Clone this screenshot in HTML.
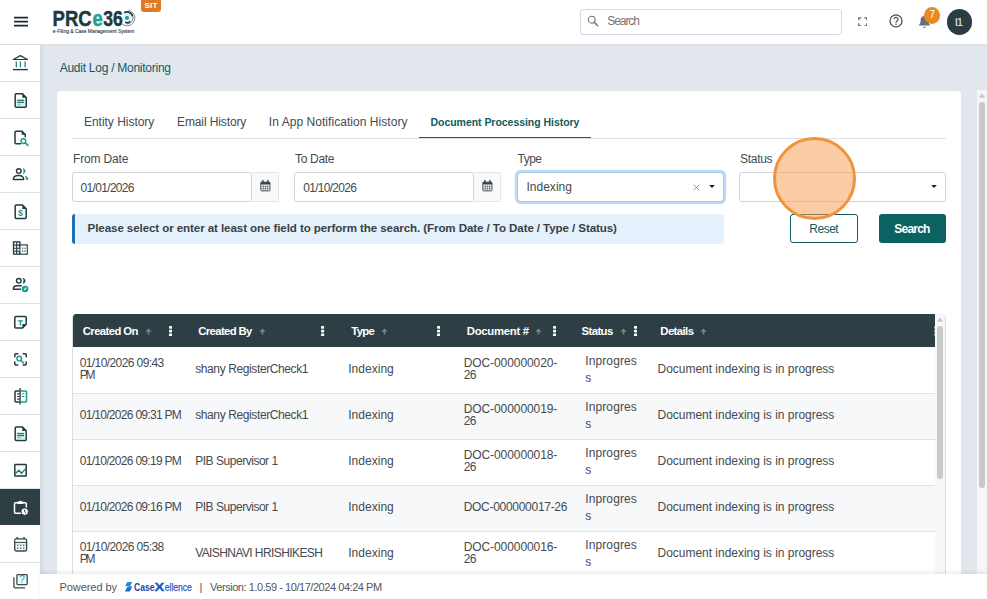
<!DOCTYPE html>
<html lang="en">
<head>
<meta charset="utf-8">
<title>Audit Log / Monitoring</title>
<style>
*{box-sizing:border-box;margin:0;padding:0}
html,body{width:987px;height:599px;overflow:hidden;background:#e2e7ee;font-family:"Liberation Sans",sans-serif;color:#454a4e}
.b{position:absolute}
.t{position:absolute;z-index:6;white-space:pre;line-height:1.16;font-family:"Liberation Sans",sans-serif}
#hdr{left:0;top:0;width:987px;height:45px;background:#fff;border-bottom:1px solid #dadee3;z-index:5}
#side{left:0;top:45px;width:40px;height:555px;background:#fff;box-shadow:2px 0 4px rgba(120,135,160,.18)}
.it{position:absolute;left:0;width:40px;height:37px;border-bottom:1px solid #dfe2e5}
.it svg{position:absolute;left:10px;top:7px;width:20px;height:20px;overflow:visible}
.act{background:#2d3f45;border-bottom:none;height:36px}
#card{left:57px;top:91px;width:904px;height:520px;background:#fff;border-radius:4px}
#tabline{left:72px;top:138px;width:874px;height:1px;background:#dcdfe3}
#tabact{left:419px;top:136.700px;width:172px;height:1.700px;background:#176264}
.inp{position:absolute;top:172px;height:30px;border:1px solid #d0d4d8;border-radius:3px;background:#fff}
.cal{position:absolute;top:172px;height:30px;width:27px;border:1px solid #e3e6ea;border-left:none;background:#f7f9fb;border-radius:0 2px 2px 0}
.cal svg{position:absolute;left:8.100px;top:7px;width:10.800px;height:11.700px}
#info{left:72px;top:214px;width:652px;height:30px;background:#e4f1fc;border-left:3px solid #1f6fb5;border-radius:3px}
#reset{left:790px;top:214px;width:68px;height:29px;border:1px solid #0f5c5e;border-radius:3px;background:#fff}
#search{left:879px;top:214px;width:67px;height:29px;border-radius:3px;background:#0b6260}
#grid{left:72px;top:314px;width:874px;height:280px;border-left:1px solid #d9dde1;border-right:1px solid #d9dde1;border-radius:4px 4px 0 0;overflow:hidden;background:#fff}
#ghead{left:0;top:0;width:862px;height:33px;background:#2d3f45}
.row{position:absolute;left:0;width:862px;height:46px;border-bottom:1px solid #dfe2e6;background:#fff}
.row.alt{background:#f6f8fa}
#gsb{left:862px;top:0;width:10px;height:280px;background:#f8f8f9}
#foot{left:40px;top:574px;width:947px;height:25px;background:#fff;box-shadow:0 -2px 4px rgba(0,0,0,.08)}
#psb{left:977px;top:90px;width:10px;height:490px;background:#f5f6f8}
.thumb{position:absolute;background:#c9c9c9;border-radius:3px}
.dots{position:absolute;width:3px;height:11px}
.dots i{position:absolute;left:0;width:2.6px;height:2.6px;border-radius:50%;background:#fff}
.arr{position:absolute;width:7px;height:8px}
</style>
</head>
<body>
<!-- header -->
<div class="b" id="hdr">
  <svg class="b" style="left:13px;top:15px" width="16" height="13" viewBox="0 0 16 13"><path d="M1 2.6h14M1 6.6h14M1 10.6h14" stroke="#1e2a30" stroke-width="1.7" fill="none"/></svg>
  <!-- logo -->
  <svg class="b" style="left:50px;top:6px" width="90" height="30" viewBox="0 0 90 30">
    <text x="2.6" y="19.9" font-family="Liberation Sans, sans-serif" font-weight="bold" font-size="22.8" fill="#1d3a42" stroke="#1d3a42" stroke-width=".5" textLength="39" lengthAdjust="spacingAndGlyphs">PRC</text>
    <text x="42.4" y="19.9" font-family="Liberation Sans, sans-serif" font-weight="bold" font-size="22.8" fill="#2a9d90" stroke="#2a9d90" stroke-width=".5" textLength="10.3" lengthAdjust="spacingAndGlyphs">e</text>
    <text x="53.2" y="19.9" font-family="Liberation Sans, sans-serif" font-weight="bold" font-size="22.8" fill="#1d3a42" stroke="#1d3a42" stroke-width=".5" textLength="19.6" lengthAdjust="spacingAndGlyphs">36</text>
    <g fill="none">
      <circle cx="77" cy="11.9" r="2.1" fill="#2a9d90"/>
      <circle cx="77" cy="11.9" r="3.5" stroke="#a6dad4" stroke-width=".6"/>
      <path d="M74.05 6.79A5.9 5.9 0 0 1 82.70 10.37" stroke="#1d3a42" stroke-width="1.8"/>
      <path d="M82.70 10.37A5.9 5.9 0 0 1 75.98 17.71" stroke="#3d565d" stroke-width=".8"/>
      <path d="M80.32 15.22A4.7 4.7 0 0 1 75.01 16.16" stroke="#1d3a42" stroke-width="1.5"/>
      <path d="M78.35 4.22A7.8 7.8 0 1 1 71.02 16.91" stroke="#4a6168" stroke-width=".75"/>
    </g>
    <text x="2.8" y="26.6" font-family="Liberation Sans, sans-serif" font-size="4.700" fill="#2c4249" stroke="#2c4249" stroke-width=".12" textLength="81.5" lengthAdjust="spacingAndGlyphs">e-Filing &amp; Case Management System</text>
  </svg>
  <div class="b" style="left:141px;top:0;width:20px;height:11.5px;background:#e07a22;border-radius:0 0 3px 3px"></div>
  <!-- search -->
  <div class="b" style="left:580px;top:9px;width:262px;height:26px;border:1px solid #d6d9dd;border-radius:3px;background:#fff"></div>
  <svg class="b" style="left:587px;top:15px" width="12" height="12" viewBox="0 0 12 12"><circle cx="4.7" cy="4.7" r="3.4" fill="none" stroke="#6f7477" stroke-width="1.1"/><path d="M7.3 7.3l3.4 3.4" stroke="#6f7477" stroke-width="1.5" stroke-linecap="round"/></svg>
  <!-- fullscreen -->
  <svg class="b" style="left:857.700px;top:16.600px" width="9.600" height="9.600" viewBox="0 0 10 10"><path d="M.8 3.400V.8h2.600M6.600.8h2.600v2.600M9.200 6.600v2.600H6.600M3.400 9.200H.8V6.600" fill="none" stroke="#5f6570" stroke-width="1.300"/></svg>
  <!-- help -->
  <svg class="b" style="left:888px;top:13px" width="16" height="16" viewBox="0 0 16 16"><circle cx="8" cy="7.9" r="6" fill="none" stroke="#4b4f5c" stroke-width="1.3"/><path d="M6 6.3a2 2 0 1 1 3.1 1.7c-.7.5-1.1.8-1.1 1.7" fill="none" stroke="#4b4f5c" stroke-width="1.2"/><circle cx="8" cy="11.3" r=".8" fill="#4b4f5c"/></svg>
  <!-- bell -->
  <svg class="b" style="left:918px;top:15px" width="13" height="14" viewBox="0 0 13 14"><path d="M6.5 1C4 1 2.6 3 2.6 5.2c0 2.6-.6 3.700-1.700 4.800v.6h11.200V10c-1.100-1.100-1.700-2.200-1.700-4.800C10.400 3 9 1 6.500 1z" fill="#6b6e7c"/><path d="M5.200 11.800a1.300 1.300 0 0 0 2.600 0z" fill="#6b6e7c"/></svg>
  <div class="b" style="left:924px;top:7px;width:16px;height:16.500px;border-radius:50%;background:#ea8a25"></div>
  <div class="b" style="left:946.800px;top:9.300px;width:25.400px;height:25.400px;border-radius:50%;background:#2b3d43"></div>
</div>
<!-- sidebar -->
<div class="b" id="side">
<div class="it" style="top:0px"><svg viewBox="0 0 20 20"><path d="M3.300 7.500L10.400 3.600 17.500 7.500z" fill="none" stroke="#223a40" stroke-width="1.2" stroke-linejoin="round" stroke-linecap="round" /><path d="M2.900 17.600h14.900" fill="none" stroke="#223a40" stroke-width="1.4"/><path d="M6.300 9.500v5.800M10.400 9.500v5.800M15.100 9.500v5.800" fill="none" stroke="#1c7a72" stroke-width="1.2"/></svg></div>
<div class="it" style="top:37px"><svg viewBox="0 0 20 20"><path d="M6.200 4.75h6.300l3.700 3.700v8.80a1 1 0 0 1-1 1H6.200a1 1 0 0 1-1-1V5.75a1 1 0 0 1 1-1z" fill="#fff" stroke="#223a40" stroke-width="1.500" stroke-linejoin="round"/><path d="M12.300 4.45l4.300 4.300h-4.300z" fill="#223a40"/><rect x="6.600" y="9.800" width="8.200" height="7" fill="#d8f0ed"/><path d="M7.300 11.400h6.700M7.300 13.400h6.700" fill="none" stroke="#1c7a72" stroke-width="1.3"/><path d="M7.300 15.600h3.400" fill="none" stroke="#8fd3cb" stroke-width="1.6"/></svg></div>
<div class="it" style="top:74px"><svg viewBox="0 0 20 20"><path d="M10.500 17.800H6a1 1 0 0 1-1-1V6.200a1 1 0 0 1 1-1h6l3.300 3.300v2.300" fill="none" stroke="#223a40" stroke-width="1.5" stroke-linejoin="round" stroke-linecap="round" /><path d="M11.700 4.700l4.100 4.100h-4.100z" fill="#223a40"/><circle cx="13.400" cy="15.100" r="2.400" fill="none" stroke="#1d9a8b" stroke-width="1.4"/><path d="M15.200 16.900l2.800 2.500" fill="none" stroke="#1d9a8b" stroke-width="1.5" stroke-linejoin="round" stroke-linecap="round" /></svg></div>
<div class="it" style="top:111px"><svg viewBox="0 0 20 20"><circle cx="8.800" cy="8.100" r="2.300" fill="none" stroke="#223a40" stroke-width="1.4"/><path d="M3.300 16.500c0-2.600 2.200-4 5.200-4s5.200 1.400 5.200 4z" fill="none" stroke="#223a40" stroke-width="1.4" stroke-linejoin="round" stroke-linecap="round" /><path d="M13.200 5.600a2.600 2.600 0 0 1 0 5c1-1.500 1-3.500 0-5z" fill="#1d9a8b" stroke="#1d9a8b" stroke-width=".8" stroke-linejoin="round"/><path d="M15.400 13.200c1.600.4 2.500 1.600 2.500 3.300h-1.600c0-1.300-.3-2.400-.9-3.300z" fill="#1d9a8b" stroke="#1d9a8b" stroke-width=".8" stroke-linejoin="round"/></svg></div>
<div class="it" style="top:148px"><svg viewBox="0 0 20 20"><path d="M6.200 5.05h6.300l3.700 3.700v8.80a1 1 0 0 1-1 1H6.200a1 1 0 0 1-1-1V6.05a1 1 0 0 1 1-1z" fill="#fff" stroke="#223a40" stroke-width="1.500" stroke-linejoin="round"/><path d="M12.300 4.75l4.300 4.300h-4.300z" fill="#223a40"/><text x="10.500" y="15.800" text-anchor="middle" font-family="Liberation Sans, sans-serif" font-weight="bold" font-size="8.800" fill="#1d9a8b">$</text></svg></div>
<div class="it" style="top:185px"><svg viewBox="0 0 20 20"><rect x="3.500" y="4.900" width="6.400" height="12.200" fill="#fff" stroke="#223a40" stroke-width="1.300"/><rect x="10" y="8" width="7.200" height="9.100" fill="#fff" stroke="#223a40" stroke-width="1.300"/><rect x="4" y="11.500" width="5.500" height="3" fill="#d8f0ed"/><path d="M6.700 4.900v12.200M3.500 8.100h6.400M3.500 11.200h6.400M3.500 14.300h6.400" fill="none" stroke="#223a40" stroke-width="1.1"/><rect x="10.700" y="8.700" width="5.800" height="7.700" fill="#f1faf9"/><path d="M12.100 11.300h1.100M14.500 11.300h1.100M12.100 14.100h1.100M14.500 14.100h1.100" fill="none" stroke="#223a40" stroke-width="1.1"/></svg></div>
<div class="it" style="top:222px"><svg viewBox="0 0 20 20"><circle cx="8.800" cy="6.800" r="2.300" fill="none" stroke="#223a40" stroke-width="1.4"/><path d="M10.500 15.200H3.300c0-2.300 1.500-3.400 3.700-3.400h4.200" fill="none" stroke="#223a40" stroke-width="1.4" stroke-linejoin="round" stroke-linecap="round" /><path d="M13.200 4.300a2.600 2.600 0 0 1 0 5c1-1.500 1-3.500 0-5z" fill="#223a40" stroke="#223a40" stroke-width=".8" stroke-linejoin="round"/><circle cx="15.100" cy="15" r="3.300" fill="#1d9a8b"/><path d="M13.800 16.300l.3-1.100 1.900-1.900.8.800-1.900 1.900z" fill="#fff"/></svg></div>
<div class="it" style="top:259px"><svg viewBox="0 0 20 20"><path d="M5.800 5.600h9.400a1 1 0 0 1 1 1v6.700l-3.700 3.700H5.800a1 1 0 0 1-1-1V6.600a1 1 0 0 1 1-1z" fill="#fff" stroke="#223a40" stroke-width="1.500" stroke-linejoin="round"/><path d="M16.700 13l-4.300 4.300v-4.300z" fill="#223a40"/><path d="M7.800 9.900h5.300M10.450 9.900v4.600" fill="none" stroke="#1d9a8b" stroke-width="1.4"/></svg></div>
<div class="it" style="top:296px"><svg viewBox="0 0 20 20"><path d="M4.800 8.800V6.800a1 1 0 0 1 1-1h2M13.200 5.800h2a1 1 0 0 1 1 1v2M16.200 14v2a1 1 0 0 1-1 1h-2M7.800 17h-2a1 1 0 0 1-1-1v-2" fill="none" stroke="#223a40" stroke-width="1.5" stroke-linejoin="round" stroke-linecap="round" /><circle cx="9.200" cy="10.600" r="2.300" fill="none" stroke="#1d9a8b" stroke-width="1.4"/><path d="M10.900 12.300l2.600 2.600" fill="none" stroke="#1d9a8b" stroke-width="1.5" stroke-linejoin="round" stroke-linecap="round" /></svg></div>
<div class="it" style="top:333px"><svg viewBox="0 0 20 20"><path d="M9.600 6.100H6a1 1 0 0 0-1 1v8.900a1 1 0 0 0 1 1h3.600" fill="none" stroke="#223a40" stroke-width="1.5" stroke-linejoin="round" stroke-linecap="round" /><path d="M7.300 8.800h2.300M7.300 11.500h2.300M7.300 14.200h2.300" fill="none" stroke="#223a40" stroke-width="1.2"/><path d="M10.100 3.100v16.300" fill="none" stroke="#4a5a5f" stroke-width="1.6"/><path d="M11 6.100h4.500a1 1 0 0 1 1 1v8.900a1 1 0 0 1-1 1H11" fill="none" stroke="#1d9a8b" stroke-width="1.5" stroke-linejoin="round" stroke-linecap="round" /><path d="M11.800 8.800h2.600M11.800 11.500h2.600" fill="none" stroke="#1d9a8b" stroke-width="1.1"/></svg></div>
<div class="it" style="top:370px"><svg viewBox="0 0 20 20"><path d="M6.200 5.05h6.300l3.700 3.700v8.80a1 1 0 0 1-1 1H6.200a1 1 0 0 1-1-1V6.05a1 1 0 0 1 1-1z" fill="#fff" stroke="#223a40" stroke-width="1.500" stroke-linejoin="round"/><path d="M12.300 4.75l4.300 4.300h-4.300z" fill="#223a40"/><rect x="6.600" y="10.100" width="8.200" height="7" fill="#d8f0ed"/><path d="M7.300 11.700h6.700M7.300 13.700h6.700" fill="none" stroke="#1c7a72" stroke-width="1.3"/><path d="M7.300 15.900h3.400" fill="none" stroke="#8fd3cb" stroke-width="1.6"/></svg></div>
<div class="it" style="top:407px"><svg viewBox="0 0 20 20"><rect x="4.800" y="5.600" width="11.400" height="11.400" rx=".6" fill="#fff" stroke="#223a40" stroke-width="1.500"/><path d="M5.200 14.600l3.800-3.300 2.500 3.100 4.300-4.800" fill="none" stroke="#1c7a72" stroke-width="1.4" stroke-linejoin="round" stroke-linecap="round" /></svg></div>
<div class="it act" style="top:444px"><svg viewBox="0 0 20 20"><path d="M10.800 17.200H5.500a1 1 0 0 1-1-1V7.700a1 1 0 0 1 1-1h2M13.300 6.700h2a1 1 0 0 1 1 1v3.300" fill="none" stroke="#ffffff" stroke-width="1.5" stroke-linejoin="round" stroke-linecap="round" /><path d="M7.500 5.600h1.600a1.400 1.400 0 0 1 2.600 0h1.600v2.300H7.500z" fill="#ffffff"/><circle cx="14.700" cy="15.600" r="3.700" fill="#ffffff" stroke="#2c3e44" stroke-width=".9"/><path d="M14.700 13.600v2.200l1.300.8" stroke="#2c3e44" stroke-width="1" fill="none"/></svg></div>
<div class="it" style="top:481px"><svg viewBox="0 0 20 20"><rect x="4.700" y="6" width="11.900" height="12" rx="1.400" fill="#e6f5f3" stroke="#3a4a50" stroke-width="1.400"/><path d="M4.700 9.300h11.900" fill="none" stroke="#3a4a50" stroke-width="1.3"/><path d="M5.400 6.700h10.500v2H5.400z" fill="#fff"/><path d="M7.300 4.100v2M14 4.100v2" fill="none" stroke="#3a4a50" stroke-width="1.5"/><g fill="#3a4a50"><rect x="7.100" y="11.600" width="1.200" height="1.200"/><rect x="10.100" y="11.600" width="1.200" height="1.200"/><rect x="13.100" y="11.600" width="1.200" height="1.200"/><rect x="7.100" y="14.600" width="1.200" height="1.200"/><rect x="10.100" y="14.600" width="1.200" height="1.200"/><rect x="13.100" y="14.600" width="1.200" height="1.200"/></g></svg></div>
<div class="it" style="top:518px"><svg viewBox="0 0 20 20"><rect x="6.900" y="4.700" width="10.300" height="9.900" rx=".8" fill="#eef8f7" stroke="#3a4a50" stroke-width="1.300"/><path d="M3.900 7.600v9.200a1 1 0 0 0 1 1h9.700" fill="none" stroke="#3a4a50" stroke-width="1.3" stroke-linejoin="round" stroke-linecap="round" /><text x="12" y="13.300" text-anchor="middle" font-family="Liberation Sans, sans-serif" font-size="10" fill="#1d9a8b">?</text></svg></div>
</div>
<!-- card -->
<div class="b" id="card"></div>
<div class="b" id="tabline"></div>
<div class="b" id="tabact"></div>
<div class="inp" style="left:72px;width:180px"></div>
<div class="cal" style="left:252px"><svg viewBox="0 0 12 13"><rect x=".9" y="2.400" width="10.200" height="9.700" rx=".8" fill="#fff" stroke="#3b4348" stroke-width="1"/><path d="M.9 2.400h10.200v2.600H.9z" fill="#3b4348"/><path d="M3.200.5v2.800M8.800.5v2.800" stroke="#3b4348" stroke-width="1.600" stroke-linecap="round"/><path d="M.9 7.400h10.200M.9 9.700h10.200M3.700 5v7M6 5v7M8.400 5v7" stroke="#5d656a" stroke-width=".7"/></svg></div>
<div class="inp" style="left:294px;width:180px"></div>
<div class="cal" style="left:474px"><svg viewBox="0 0 12 13"><rect x=".9" y="2.400" width="10.200" height="9.700" rx=".8" fill="#fff" stroke="#3b4348" stroke-width="1"/><path d="M.9 2.400h10.200v2.600H.9z" fill="#3b4348"/><path d="M3.200.5v2.800M8.800.5v2.800" stroke="#3b4348" stroke-width="1.600" stroke-linecap="round"/><path d="M.9 7.400h10.200M.9 9.700h10.200M3.700 5v7M6 5v7M8.400 5v7" stroke="#5d656a" stroke-width=".7"/></svg></div>
<div class="inp" style="left:517px;width:207px;border-color:#a3c6ec;border-radius:4px;box-shadow:0 0 0 2.200px #c0d9f4"></div>
<svg class="b" style="left:691.500px;top:182.500px" width="9" height="9" viewBox="0 0 9 9"><path d="M1.600 1.800l5.600 5.400M7.200 1.800l-5.600 5.400" stroke="#8d9297" stroke-width=".9"/></svg>
<svg class="b" style="left:708px;top:184px" width="8" height="5" viewBox="0 0 8 5"><path d="M1.100 1h5.800L4 4.100z" fill="#1d2226"/></svg>
<div class="inp" style="left:739px;width:207px"></div>
<svg class="b" style="left:930px;top:184px" width="8" height="5" viewBox="0 0 8 5"><path d="M1.100 1h5.800L4 4.100z" fill="#1d2226"/></svg>
<div class="b" id="info"></div>
<div class="b" id="reset"></div>
<div class="b" id="search"></div>
<!-- grid -->
<div class="b" id="grid">
  <div class="row" style="top:34px"></div>
  <div class="row alt" style="top:80px"></div>
  <div class="row" style="top:126px"></div>
  <div class="row alt" style="top:172px"></div>
  <div class="row" style="top:218px"></div>
  <div class="b" id="ghead"></div>
  <div class="b" id="gsb">
    <svg class="b" style="left:2px;top:2.500px" width="6" height="5" viewBox="0 0 6 5"><path d="M3 .2L6 4.700H0z" fill="#c6c6c6"/></svg>
    <div class="thumb" style="left:2px;top:12px;width:6px;height:153px"></div>
  </div>
</div>
<!-- page scrollbar -->
<div class="b" id="psb">
  <svg class="b" style="left:2px;top:2.500px" width="6" height="5" viewBox="0 0 6 5"><path d="M3 .2L6 4.700H0z" fill="#c6c6c6"/></svg>
  <div class="thumb" style="left:2px;top:12px;width:6px;height:386px"></div>
</div>
<!-- footer -->
<div class="b" id="foot"></div>
<!-- texts -->
<span class="t" style="left:59.7px;top:61.6px;font-size:12px;color:#0f5c5e;letter-spacing:-0.26px">Audit Log / Monitoring</span>
<span class="t" style="left:84.0px;top:116.3px;font-size:12px;color:#454a4e;letter-spacing:-0.03px">Entity History</span>
<span class="t" style="left:177.0px;top:116.3px;font-size:12px;color:#454a4e;letter-spacing:-0.11px">Email History</span>
<span class="t" style="left:268.8px;top:116.3px;font-size:12px;color:#454a4e;letter-spacing:0.05px">In App Notification History</span>
<span class="t" style="left:430.5px;top:116.1px;font-size:10.5px;font-weight:bold;color:#0f5c5e;letter-spacing:-0.04px">Document Processing History</span>
<span class="t" style="left:73.0px;top:152.9px;font-size:12px;color:#454a4e;letter-spacing:-0.15px">From Date</span>
<span class="t" style="left:295.0px;top:152.9px;font-size:12px;color:#454a4e;letter-spacing:-0.31px">To Date</span>
<span class="t" style="left:517.5px;top:152.9px;font-size:12px;color:#454a4e;letter-spacing:-0.51px">Type</span>
<span class="t" style="left:740.0px;top:152.9px;font-size:12px;color:#454a4e;letter-spacing:-0.29px">Status</span>
<span class="t" style="left:80.6px;top:181.7px;font-size:12px;color:#454a4e;letter-spacing:-0.68px">01/01/2026</span>
<span class="t" style="left:303.2px;top:181.7px;font-size:12px;color:#454a4e;letter-spacing:-0.70px">01/10/2026</span>
<span class="t" style="left:526.4px;top:180.9px;font-size:12px;color:#454a4e;letter-spacing:0.03px">Indexing</span>
<span class="t" style="left:87.6px;top:220.5px;font-size:11.6px;font-weight:bold;color:#3a4145;letter-spacing:-0.10px">Please select or enter at least one field to perform the search. (From Date / To Date / Type / Status)</span>
<span class="t" style="left:809.3px;top:222.6px;font-size:12px;color:#0f5c5e;letter-spacing:-0.49px">Reset</span>
<span class="t" style="left:894.3px;top:222.6px;font-size:12px;font-weight:bold;color:#ffffff;letter-spacing:-0.79px">Search</span>
<span class="t" style="left:82.8px;top:324.5px;font-size:11.3px;font-weight:bold;color:#ffffff;letter-spacing:-0.59px">Created On</span>
<span class="t" style="left:198.3px;top:324.5px;font-size:11.3px;font-weight:bold;color:#ffffff;letter-spacing:-0.62px">Created By</span>
<span class="t" style="left:351.3px;top:324.5px;font-size:11.3px;font-weight:bold;color:#ffffff;letter-spacing:-0.71px">Type</span>
<span class="t" style="left:466.8px;top:324.5px;font-size:11.3px;font-weight:bold;color:#ffffff;letter-spacing:-0.27px">Document #</span>
<span class="t" style="left:581.6px;top:324.5px;font-size:11.3px;font-weight:bold;color:#ffffff;letter-spacing:-0.59px">Status</span>
<span class="t" style="left:660.3px;top:324.5px;font-size:11.3px;font-weight:bold;color:#ffffff;letter-spacing:-0.56px">Details</span>
<span class="t" style="left:79.7px;top:357.3px;font-size:12px;color:#454a4e;letter-spacing:-0.59px">01/10/2026 09:43</span>
<span class="t" style="left:79.7px;top:369.3px;font-size:12px;color:#454a4e;letter-spacing:-2.20px">PM</span>
<span class="t" style="left:195.2px;top:363.3px;font-size:12px;color:#454a4e;letter-spacing:-0.39px">shany RegisterCheck1</span>
<span class="t" style="left:348.2px;top:363.3px;font-size:12px;color:#454a4e;letter-spacing:0.03px">Indexing</span>
<span class="t" style="left:463.7px;top:357.3px;font-size:12px;color:#454a4e;letter-spacing:-0.08px">DOC-000000020-</span>
<span class="t" style="left:463.7px;top:369.3px;font-size:12px;color:#454a4e;letter-spacing:-0.56px">26</span>
<span class="t" style="left:585.2px;top:354.8px;font-size:12px;color:#454a4e;letter-spacing:0.12px">Inprogres</span>
<span class="t" style="left:585.2px;top:371.8px;font-size:12px;color:#454a4e;letter-spacing:0.00px">s</span>
<span class="t" style="left:657.5px;top:363.3px;font-size:12px;color:#454a4e;letter-spacing:-0.02px">Document indexing is in progress</span>
<span class="t" style="left:79.7px;top:409.3px;font-size:12px;color:#454a4e;letter-spacing:-0.70px">01/10/2026 09:31 PM</span>
<span class="t" style="left:195.2px;top:409.3px;font-size:12px;color:#454a4e;letter-spacing:-0.39px">shany RegisterCheck1</span>
<span class="t" style="left:348.2px;top:409.3px;font-size:12px;color:#454a4e;letter-spacing:0.03px">Indexing</span>
<span class="t" style="left:463.7px;top:403.3px;font-size:12px;color:#454a4e;letter-spacing:-0.08px">DOC-000000019-</span>
<span class="t" style="left:463.7px;top:415.3px;font-size:12px;color:#454a4e;letter-spacing:-0.56px">26</span>
<span class="t" style="left:585.2px;top:400.8px;font-size:12px;color:#454a4e;letter-spacing:0.12px">Inprogres</span>
<span class="t" style="left:585.2px;top:417.8px;font-size:12px;color:#454a4e;letter-spacing:0.00px">s</span>
<span class="t" style="left:657.5px;top:409.3px;font-size:12px;color:#454a4e;letter-spacing:-0.02px">Document indexing is in progress</span>
<span class="t" style="left:79.7px;top:455.3px;font-size:12px;color:#454a4e;letter-spacing:-0.70px">01/10/2026 09:19 PM</span>
<span class="t" style="left:195.2px;top:455.3px;font-size:12px;color:#454a4e;letter-spacing:-0.47px">PIB Supervisor 1</span>
<span class="t" style="left:348.2px;top:455.3px;font-size:12px;color:#454a4e;letter-spacing:0.03px">Indexing</span>
<span class="t" style="left:463.7px;top:449.3px;font-size:12px;color:#454a4e;letter-spacing:-0.08px">DOC-000000018-</span>
<span class="t" style="left:463.7px;top:461.3px;font-size:12px;color:#454a4e;letter-spacing:-0.56px">26</span>
<span class="t" style="left:585.2px;top:446.8px;font-size:12px;color:#454a4e;letter-spacing:0.12px">Inprogres</span>
<span class="t" style="left:585.2px;top:463.8px;font-size:12px;color:#454a4e;letter-spacing:0.00px">s</span>
<span class="t" style="left:657.5px;top:455.3px;font-size:12px;color:#454a4e;letter-spacing:-0.02px">Document indexing is in progress</span>
<span class="t" style="left:79.7px;top:501.3px;font-size:12px;color:#454a4e;letter-spacing:-0.70px">01/10/2026 09:16 PM</span>
<span class="t" style="left:195.2px;top:501.3px;font-size:12px;color:#454a4e;letter-spacing:-0.47px">PIB Supervisor 1</span>
<span class="t" style="left:348.2px;top:501.3px;font-size:12px;color:#454a4e;letter-spacing:0.03px">Indexing</span>
<span class="t" style="left:463.7px;top:501.3px;font-size:12px;color:#454a4e;letter-spacing:-0.29px">DOC-000000017-26</span>
<span class="t" style="left:585.2px;top:492.8px;font-size:12px;color:#454a4e;letter-spacing:0.12px">Inprogres</span>
<span class="t" style="left:585.2px;top:509.8px;font-size:12px;color:#454a4e;letter-spacing:0.00px">s</span>
<span class="t" style="left:657.5px;top:501.3px;font-size:12px;color:#454a4e;letter-spacing:-0.02px">Document indexing is in progress</span>
<span class="t" style="left:79.7px;top:541.3px;font-size:12px;color:#454a4e;letter-spacing:-0.59px">01/10/2026 05:38</span>
<span class="t" style="left:79.7px;top:553.3px;font-size:12px;color:#454a4e;letter-spacing:-2.20px">PM</span>
<span class="t" style="left:195.2px;top:547.3px;font-size:12px;color:#454a4e;letter-spacing:-0.59px">VAISHNAVI HRISHIKESH</span>
<span class="t" style="left:348.2px;top:547.3px;font-size:12px;color:#454a4e;letter-spacing:0.03px">Indexing</span>
<span class="t" style="left:463.7px;top:541.3px;font-size:12px;color:#454a4e;letter-spacing:-0.08px">DOC-000000016-</span>
<span class="t" style="left:463.7px;top:553.3px;font-size:12px;color:#454a4e;letter-spacing:-0.56px">26</span>
<span class="t" style="left:585.2px;top:538.8px;font-size:12px;color:#454a4e;letter-spacing:0.12px">Inprogres</span>
<span class="t" style="left:585.2px;top:555.8px;font-size:12px;color:#454a4e;letter-spacing:0.00px">s</span>
<span class="t" style="left:657.5px;top:547.3px;font-size:12px;color:#454a4e;letter-spacing:-0.02px">Document indexing is in progress</span>
<span class="t" style="left:59.5px;top:581.2px;font-size:11px;color:#50565b;letter-spacing:-0.07px">Powered by</span>
<span class="t" style="left:199.5px;top:581.2px;font-size:11px;color:#50565b;letter-spacing:0.00px">|</span>
<span class="t" style="left:210.0px;top:581.2px;font-size:11px;color:#50565b;letter-spacing:-0.45px">Version: 1.0.59 - 10/17/2024 04:24 PM</span>
<span class="t" style="left:607.2px;top:14.6px;font-size:12px;color:#757575;letter-spacing:-1.05px">Search</span>
<span class="t" style="left:929.5px;top:9.4px;font-size:10px;color:#ffffff;letter-spacing:0.00px">7</span>
<span class="t" style="left:954.7px;top:15.7px;font-size:11.5px;color:#e3f4f2;letter-spacing:-1.09px">I1</span>
<span class="t" style="left:144.5px;top:1.2px;font-size:8px;font-weight:bold;color:#ffffff;letter-spacing:0.27px">SIT</span>
<!-- header col decorations -->
<svg class="b" style="left:145.4px;top:327.500px" width="7" height="7" viewBox="0 0 7 7"><path d="M3.500.4L6.700 3.700H4.300V6.600H2.700V3.700H.3z" fill="#72868b"/></svg>
<svg class="b" style="left:258.5px;top:327.500px" width="7" height="7" viewBox="0 0 7 7"><path d="M3.500.4L6.700 3.700H4.300V6.600H2.700V3.700H.3z" fill="#72868b"/></svg>
<svg class="b" style="left:380.5px;top:327.500px" width="7" height="7" viewBox="0 0 7 7"><path d="M3.500.4L6.700 3.700H4.300V6.600H2.700V3.700H.3z" fill="#72868b"/></svg>
<svg class="b" style="left:535.3px;top:327.500px" width="7" height="7" viewBox="0 0 7 7"><path d="M3.500.4L6.700 3.700H4.300V6.600H2.700V3.700H.3z" fill="#72868b"/></svg>
<svg class="b" style="left:619.7px;top:327.500px" width="7" height="7" viewBox="0 0 7 7"><path d="M3.500.4L6.700 3.700H4.300V6.600H2.700V3.700H.3z" fill="#72868b"/></svg>
<svg class="b" style="left:700.2px;top:327.500px" width="7" height="7" viewBox="0 0 7 7"><path d="M3.500.4L6.700 3.700H4.300V6.600H2.700V3.700H.3z" fill="#72868b"/></svg>
<svg class="b" style="left:169.0px;top:325.600px;" width="3.200" height="10.400" viewBox="0 0 3.200 10.400"><rect x="0" y="0" width="3.200" height="2.700" rx=".7" fill="#fff"/><rect x="0" y="3.800" width="3.200" height="2.700" rx=".7" fill="#fff"/><rect x="0" y="7.600" width="3.200" height="2.700" rx=".7" fill="#fff"/></svg>
<svg class="b" style="left:321.4px;top:325.600px;" width="3.200" height="10.400" viewBox="0 0 3.200 10.400"><rect x="0" y="0" width="3.200" height="2.700" rx=".7" fill="#fff"/><rect x="0" y="3.800" width="3.200" height="2.700" rx=".7" fill="#fff"/><rect x="0" y="7.600" width="3.200" height="2.700" rx=".7" fill="#fff"/></svg>
<svg class="b" style="left:436.9px;top:325.600px;" width="3.200" height="10.400" viewBox="0 0 3.200 10.400"><rect x="0" y="0" width="3.200" height="2.700" rx=".7" fill="#fff"/><rect x="0" y="3.800" width="3.200" height="2.700" rx=".7" fill="#fff"/><rect x="0" y="7.600" width="3.200" height="2.700" rx=".7" fill="#fff"/></svg>
<svg class="b" style="left:552.7px;top:325.600px;" width="3.200" height="10.400" viewBox="0 0 3.200 10.400"><rect x="0" y="0" width="3.200" height="2.700" rx=".7" fill="#fff"/><rect x="0" y="3.800" width="3.200" height="2.700" rx=".7" fill="#fff"/><rect x="0" y="7.600" width="3.200" height="2.700" rx=".7" fill="#fff"/></svg>
<svg class="b" style="left:633.7px;top:325.600px;" width="3.200" height="10.400" viewBox="0 0 3.200 10.400"><rect x="0" y="0" width="3.200" height="2.700" rx=".7" fill="#fff"/><rect x="0" y="3.800" width="3.200" height="2.700" rx=".7" fill="#fff"/><rect x="0" y="7.600" width="3.200" height="2.700" rx=".7" fill="#fff"/></svg>
<svg class="b" style="left:933.7px;top:325.600px;clip-path:inset(0 2.200px 0 0);opacity:.8;" width="3.200" height="10.400" viewBox="0 0 3.200 10.400"><rect x="0" y="0" width="3.200" height="2.700" rx=".7" fill="#fff"/><rect x="0" y="3.800" width="3.200" height="2.700" rx=".7" fill="#fff"/><rect x="0" y="7.600" width="3.200" height="2.700" rx=".7" fill="#fff"/></svg>
<svg class="b" style="left:123px;top:580px" width="72" height="15" viewBox="0 0 72 15"><path d="M4.300 2.100h4.900L7 6.300h-4.900z" fill="#1a8be0"/><path d="M4.100 7.200h4.900l-2.200 4.200H1.900z" fill="#1173d6"/><path d="M7 6.300l2-.1-1.400 1.600-3.500-.6z" fill="#0d62c4"/><text x="11" y="11.300" font-family="Liberation Sans, sans-serif" font-size="10.300" font-weight="bold" fill="#1b4aa0" textLength="20.500" lengthAdjust="spacingAndGlyphs">Case</text><text x="31.600" y="11.300" font-family="Liberation Sans, sans-serif" font-size="10.800" font-weight="bold" fill="#1259d0" stroke="#1259d0" stroke-width=".3" textLength="9.800" lengthAdjust="spacingAndGlyphs">X</text><text x="41.800" y="11.300" font-family="Liberation Sans, sans-serif" font-size="10.300" fill="#3457b5" stroke="#3457b5" stroke-width=".25" textLength="27" lengthAdjust="spacingAndGlyphs">ellence</text></svg>
<!-- orange click marker -->
<div class="b" style="left:773px;top:137px;width:83px;height:83px;border-radius:50%;background:rgba(250,160,85,.53);border:3.500px solid #f1933d"></div>
</body>
</html>
